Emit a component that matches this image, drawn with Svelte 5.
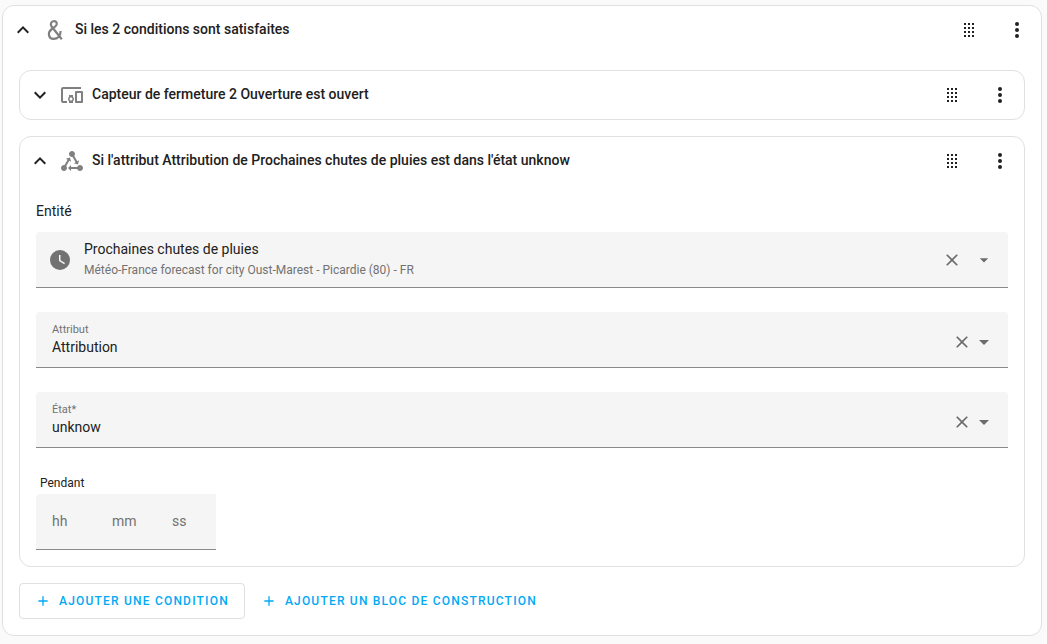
<script lang="ts">
    const icons = {
        chevronUp: "M7.41,15.41L12,10.83L16.59,15.41L18,14L12,8L6,14L7.41,15.41Z",
        chevronDown: "M7.41,8.58L12,13.17L16.59,8.58L18,10L12,16L6,10L7.41,8.58Z",
        devices:
            "M3 6H21V4H3C1.9 4 1 4.9 1 6V18C1 19.1 1.9 20 3 20H7V18H3V6M13 12H9V13.78C8.39 14.33 8 15.11 8 16C8 16.89 8.39 17.67 9 18.22V20H13V18.22C13.61 17.67 14 16.88 14 16S13.61 14.33 13 13.78V12M11 17.5C10.17 17.5 9.5 16.83 9.5 16S10.17 14.5 11 14.5 12.5 15.17 12.5 16 11.83 17.5 11 17.5M22 8H16C15.5 8 15 8.5 15 9V19C15 19.5 15.5 20 16 20H22C22.5 20 23 19.5 23 19V9C23 8.5 22.5 8 22 8M21 18H17V10H21V18Z",
        stateMachine:
            "M6.27 17.05C6.72 17.58 7 18.25 7 19C7 20.66 5.66 22 4 22S1 20.66 1 19 2.34 16 4 16C4.18 16 4.36 16 4.53 16.05L7.6 10.69L5.86 9.7L9.95 8.58L11.07 12.67L9.33 11.68L6.27 17.05M20 16C18.7 16 17.6 16.84 17.18 18H11V16L8 19L11 22V20H17.18C17.6 21.16 18.7 22 20 22C21.66 22 23 20.66 23 19S21.66 16 20 16M12 8C12.18 8 12.36 8 12.53 7.95L15.6 13.31L13.86 14.3L17.95 15.42L19.07 11.33L17.33 12.32L14.27 6.95C14.72 6.42 15 5.75 15 5C15 3.34 13.66 2 12 2S9 3.34 9 5 10.34 8 12 8Z",
        dragGrid:
            "M7 5H9V7H7V5M11 5H13V7H11V5M15 5H17V7H15V5M7 9H9V11H7V9M11 9H13V11H11V9M15 9H17V11H15V9M7 13H9V15H7V13M11 13H13V15H11V13M15 13H17V15H15V13M7 17H9V19H7V17M11 17H13V19H11V17M15 17H17V19H15V17Z",
        dots: "M12,16A2,2 0 0,1 14,18A2,2 0 0,1 12,20A2,2 0 0,1 10,18A2,2 0 0,1 12,16M12,10A2,2 0 0,1 14,12A2,2 0 0,1 12,14A2,2 0 0,1 10,12A2,2 0 0,1 12,10M12,4A2,2 0 0,1 14,6A2,2 0 0,1 12,8A2,2 0 0,1 10,6A2,2 0 0,1 12,4Z",
        clock: "M12,2A10,10 0 0,0 2,12A10,10 0 0,0 12,22A10,10 0 0,0 22,12A10,10 0 0,0 12,2M16.2,16.2L11,13V7H12.5V12.2L17,14.9L16.2,16.2Z",
        close: "M19,6.41L17.59,5L12,10.59L6.41,5L5,6.41L10.59,12L5,17.59L6.41,19L12,13.41L17.59,19L19,17.59L13.41,12L19,6.41Z",
        menuDown: "M7,10L12,15L17,10H7Z",
        plus: "M19,13H13V19H11V13H5V11H11V5H13V11H19V13Z",
    };

    let open = $state(true);
    let sensorOpen = $state(false);
    let stateOpen = $state(true);
    let entity = $state("Prochaines chutes de pluies");
    let fields = $state([
        { id: "attribute", label: "Attribut", value: "Attribution" },
        { id: "state", label: "État*", value: "unknow" },
    ]);
    let duration = $state([
        { unit: "hh", name: "Heures", value: "" },
        { unit: "mm", name: "Minutes", value: "" },
        { unit: "ss", name: "Secondes", value: "" },
    ]);
</script>

{#snippet icon(path: string, size = 24)}
    <svg width={size} height={size} viewBox="0 0 24 24" aria-hidden="true">
        <path d={path} fill="currentColor" />
    </svg>
{/snippet}

{#snippet ampersand()}
    <svg width="24" height="24" viewBox="0 0 24 24" aria-hidden="true">
        <path
            d="M18.8 21.2L8.6 8.5C7 6.2 8.1 3.1 11 3.1C13.9 3.1 14.8 6.6 12.4 8.4L8.3 11.5C4.2 14.7 5.7 20.9 10.5 20.9C14.8 20.9 17.6 17.7 17.6 13"
            fill="none"
            stroke="currentColor"
            stroke-width="2.2"
        />
    </svg>
{/snippet}

{#snippet actions()}
    <button class="icon-button" aria-label="Déplacer">{@render icon(icons.dragGrid)}</button>
    <button class="icon-button" aria-label="Menu">{@render icon(icons.dots)}</button>
{/snippet}

<main class="card outer">
    <header>
        <button class="toggle" aria-expanded={open} aria-label="Replier" onclick={() => (open = !open)}>
            {@render icon(open ? icons.chevronUp : icons.chevronDown)}
        </button>
        <span class="leading">{@render ampersand()}</span>
        <h2>Si les 2 conditions sont satisfaites</h2>
        {@render actions()}
    </header>

    {#if open}
        <div class="content conditions">
            <section class="card">
                <header>
                    <button
                        class="toggle"
                        aria-expanded={sensorOpen}
                        aria-label="Déplier"
                        onclick={() => (sensorOpen = !sensorOpen)}
                    >
                        {@render icon(sensorOpen ? icons.chevronUp : icons.chevronDown)}
                    </button>
                    <span class="leading">{@render icon(icons.devices)}</span>
                    <h3>Capteur de fermeture 2 Ouverture est ouvert</h3>
                    {@render actions()}
                </header>
            </section>

            <section class="card">
                <header>
                    <button
                        class="toggle"
                        aria-expanded={stateOpen}
                        aria-label="Replier"
                        onclick={() => (stateOpen = !stateOpen)}
                    >
                        {@render icon(stateOpen ? icons.chevronUp : icons.chevronDown)}
                    </button>
                    <span class="leading">{@render icon(icons.stateMachine)}</span>
                    <h3>Si l'attribut Attribution de Prochaines chutes de pluies est dans l'état unknow</h3>
                    {@render actions()}
                </header>

                {#if stateOpen}
                    <div class="content">
                        <label class="entity-label" for="entity">Entité</label>
                        <div class="field entity">
                            <span class="entity-icon">{@render icon(icons.clock)}</span>
                            <div class="text">
                                <input id="entity" bind:value={entity} />
                                <span class="secondary">
                                    Météo-France forecast for city Oust-Marest - Picardie (80) - FR
                                </span>
                            </div>
                            <button class="small" aria-label="Effacer" onclick={() => (entity = "")}>
                                {@render icon(icons.close, 20)}
                            </button>
                            <button class="small" aria-label="Ouvrir">
                                {@render icon(icons.menuDown, 20)}
                            </button>
                        </div>

                        {#each fields as field (field.id)}
                            <div class="field combo">
                                <div class="text">
                                    <label for={field.id}>{field.label}</label>
                                    <input id={field.id} bind:value={field.value} />
                                </div>
                                <button class="small" aria-label="Effacer" onclick={() => (field.value = "")}>
                                    {@render icon(icons.close, 20)}
                                </button>
                                <button class="small" aria-label="Ouvrir">
                                    {@render icon(icons.menuDown)}
                                </button>
                            </div>
                        {/each}

                        <fieldset>
                            <legend>Pendant</legend>
                            <div class="duration">
                                {#each duration as part (part.unit)}
                                    <input
                                        aria-label={part.name}
                                        placeholder={part.unit}
                                        bind:value={part.value}
                                    />
                                {/each}
                            </div>
                        </fieldset>
                    </div>
                {/if}
            </section>

            <div class="buttons">
                <button class="add outlined">
                    {@render icon(icons.plus, 16)}
                    Ajouter une condition
                </button>
                <button class="add">
                    {@render icon(icons.plus, 16)}
                    Ajouter un bloc de construction
                </button>
            </div>
        </div>
    {/if}
</main>

<style>
    :global(body) {
        background: #fafafa;
        color: #212121;
        font-family: Roboto, "Noto Sans", sans-serif;
        font-size: 14px;
        line-height: 20px;
    }

    svg {
        display: block;
        flex: none;
    }

    button {
        display: flex;
        align-items: center;
        justify-content: center;
        flex: none;
        padding: 0;
        border: none;
        background: none;
        color: inherit;
        font: inherit;
        cursor: pointer;
    }

    input {
        display: block;
        box-sizing: border-box;
        width: 100%;
        min-width: 0;
        height: 20px;
        padding: 0;
        border: none;
        outline: none;
        background: transparent;
        color: inherit;
        font: inherit;
    }

    .card {
        border: 1px solid #e0e0e0;
        border-radius: 12px;
        background: #fff;
    }

    .outer {
        margin: 5px 5px 8px 2px;
    }

    header {
        display: flex;
        align-items: center;
        height: 48px;
    }

    .toggle {
        width: 40px;
        height: 40px;
    }

    .leading {
        margin-right: 8px;
        color: #808080;
    }

    h2,
    h3 {
        flex: 1;
        min-width: 0;
        margin: 0;
        padding-bottom: 2px;
        font-size: 14px;
        font-weight: 500;
        line-height: 20px;
    }

    .icon-button {
        width: 48px;
        height: 48px;
    }

    .content {
        padding: 16px;
    }

    .conditions {
        display: flex;
        flex-direction: column;
        gap: 16px;
    }

    .entity-label {
        display: block;
        margin-bottom: 11px;
    }

    .field {
        display: flex;
        align-items: center;
        box-sizing: border-box;
        height: 56px;
        margin-bottom: 24px;
        padding: 0 8px 0 16px;
        border-bottom: 1px solid #8a8a8a;
        border-radius: 4px 4px 0 0;
        background: #f5f5f5;
    }

    .text {
        display: flex;
        flex-direction: column;
        flex: 1;
        min-width: 0;
    }

    .small {
        width: 32px;
        height: 32px;
        color: #6b6b6b;
    }

    .entity {
        padding-left: 12px;
    }

    .entity .text {
        gap: 1px;
    }

    .entity-icon {
        margin-right: 12px;
        color: #727272;
    }

    .secondary {
        color: #727272;
        font-size: 12px;
    }

    .combo {
        padding-right: 13px;
    }

    .combo input {
        height: 19px;
    }

    .combo label {
        color: #727272;
        font-size: 11px;
        line-height: 14px;
    }

    .combo .small {
        width: 22px;
        margin-top: 4px;
    }

    fieldset {
        margin: 0;
        padding: 0;
        border: none;
    }

    legend {
        padding: 1px 4px;
        font-size: 12px;
    }

    .duration {
        display: flex;
        width: 180px;
        border-bottom: 1px solid #8a8a8a;
        border-radius: 4px 0 0 0;
        background: #f5f5f5;
    }

    .duration input {
        width: 60px;
        height: 55px;
        padding: 0 16px 2px;
    }

    .duration input::placeholder {
        color: #727272;
        opacity: 1;
    }

    .buttons {
        display: flex;
    }

    .add {
        gap: 8px;
        height: 36px;
        padding: 0 15px;
        border: 1px solid transparent;
        border-radius: 4px;
        color: #03a9f4;
        font-size: 12px;
        font-weight: 500;
        letter-spacing: 0.1em;
        text-transform: uppercase;
    }

    .outlined {
        border-color: #e0e0e0;
    }
</style>
